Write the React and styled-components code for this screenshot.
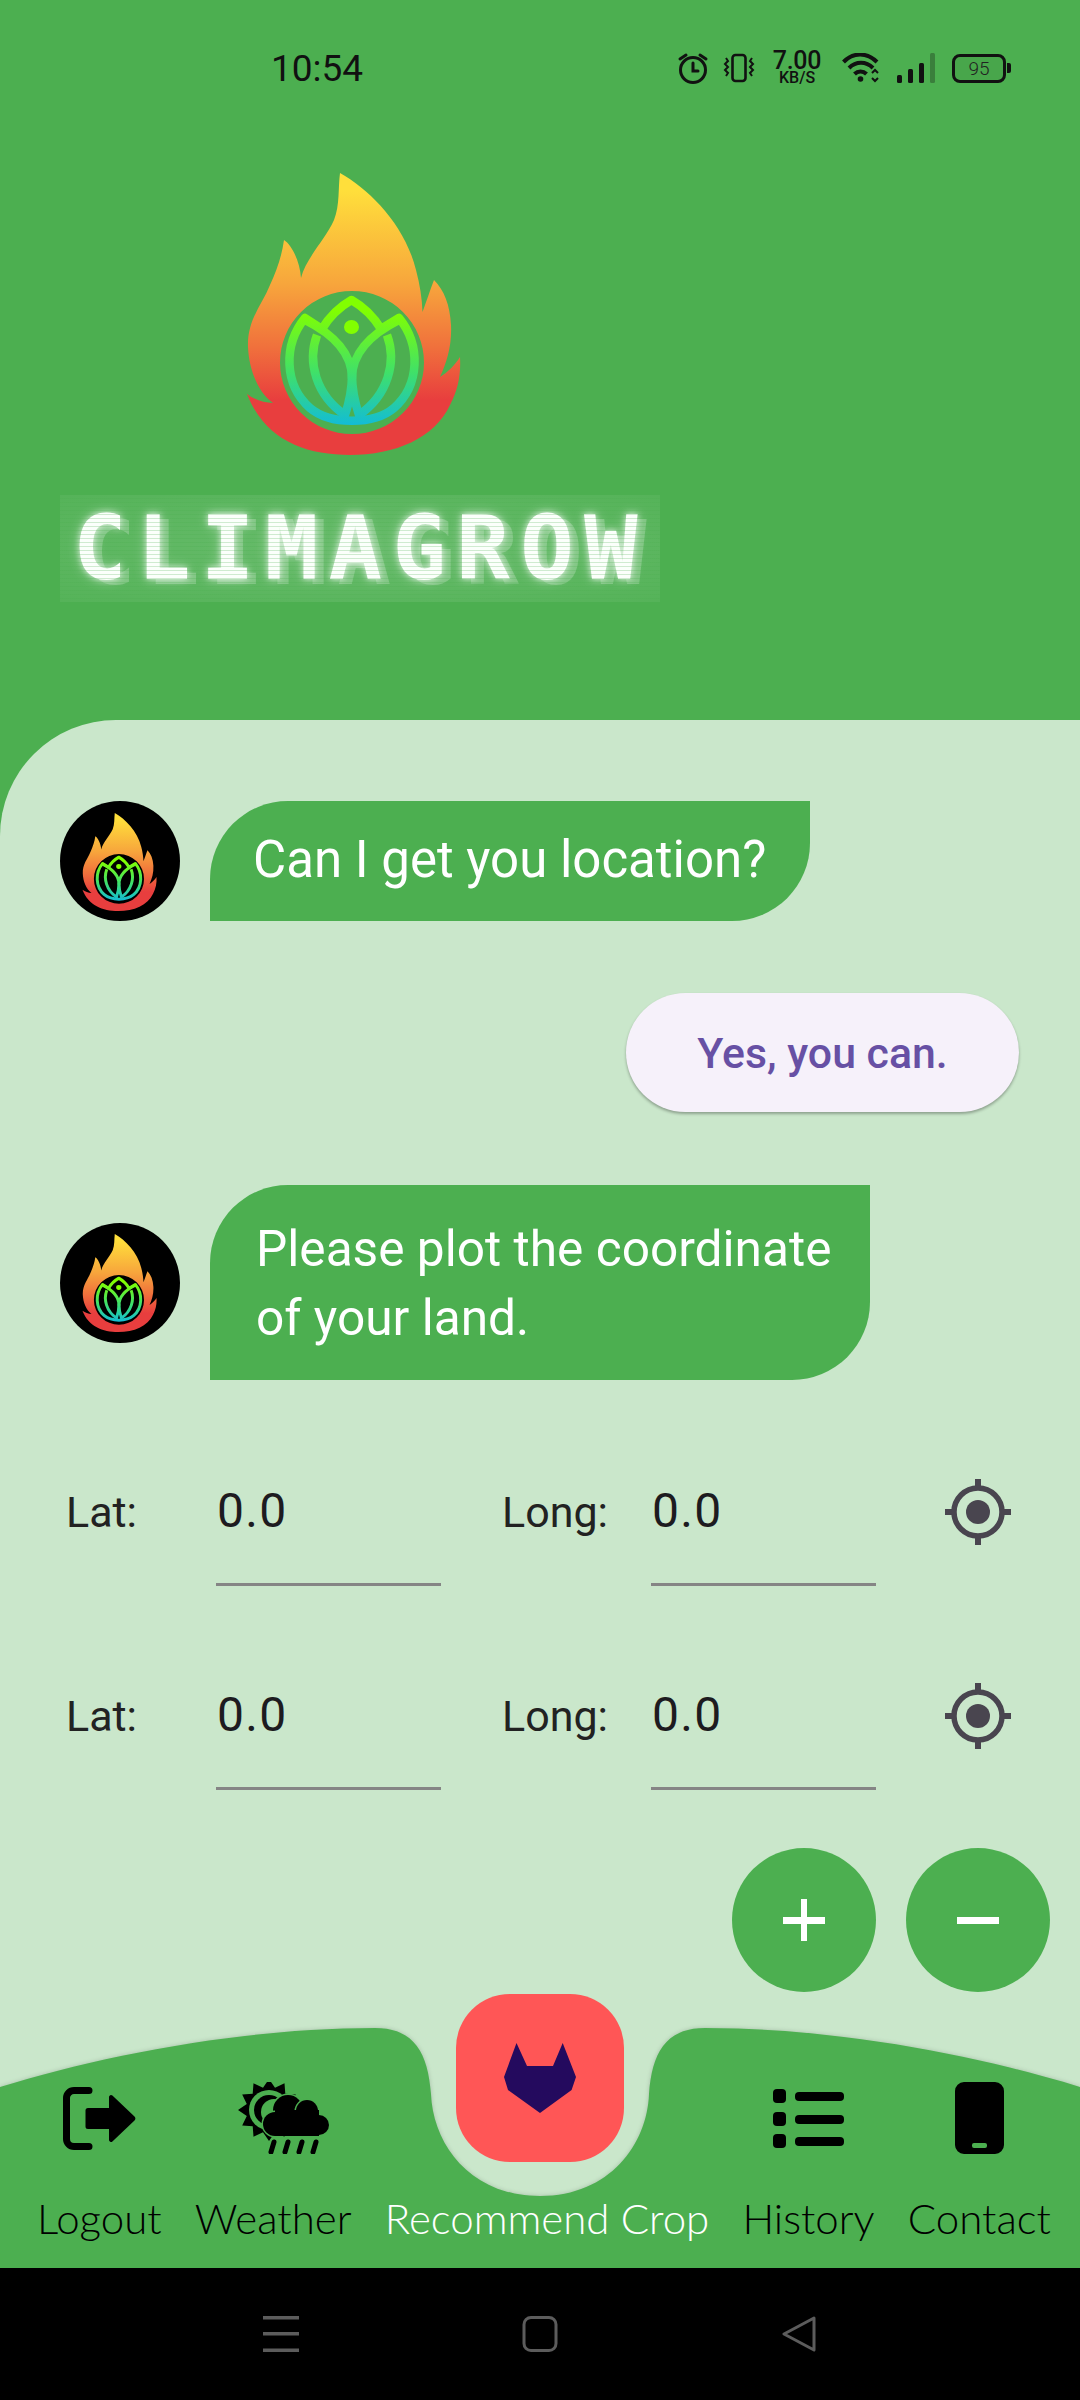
import React from 'react';
import styled, { createGlobalStyle } from 'styled-components';

const GREEN = '#4CAF50';
const LIGHT = '#CAE7CB';

const Global = createGlobalStyle`
  html, body { margin: 0; padding: 0; background: #000; }
  * { box-sizing: border-box; }
`;

const Screen = styled.div`
  width: 1080px; height: 2400px; display: flex; flex-direction: column;
  background: ${GREEN}; font-family: Roboto, "Liberation Sans", sans-serif; overflow: hidden;
`;

const Header = styled.header`
  height: 720px; flex: none; display: flex; flex-direction: column; background: ${GREEN};
`;
const StatusBar = styled.div`
  height: 136px; flex: none; display: flex; align-items: center; padding: 0 0 0 271px; color: #111;
`;
const Clock = styled.span` font-size: 37px; line-height: 1; width: 406px; `;
const StatusIcons = styled.div` display: flex; align-items: center; `;
const Speed = styled.div`
  display: flex; flex-direction: column; align-items: center; width: 48px; margin: 0 21px 0 18px;
  font-size: 25px; font-weight: 500; line-height: 19px; letter-spacing: -.3px;
  & small { font-size: 16px; line-height: 15px; font-weight: 500; letter-spacing: 0; }
`;
const StatusSvg = styled.svg` display: block; flex: none; margin-left: ${p => p.$gap || 0}px; `;
const Battery = styled.div`
  position: relative; width: 54px; height: 29px; margin-left: 17px; border: 3.5px solid #111; border-radius: 8px;
  display: flex; align-items: center; justify-content: center; font-size: 19px; font-weight: 300; color: #222;
  background: rgba(0,0,0,.05);
  &::after { content: ''; position: absolute; right: -8px; top: 6px; width: 4px; height: 10px; background: #111; border-radius: 0 2px 2px 0; }
`;
const BigLogo = styled.div` margin: 29px 0 0 240px; width: 230px; height: 295px; `;
const LogoSvg = styled.svg` display: block; width: 100%; height: 100%; `;
const Wordmark = styled.div`
  position: relative; width: 600px; height: 107px; margin: 35px 0 0 60px; padding-left: 13px;
  display: flex; align-items: center; overflow: hidden;
  background: radial-gradient(ellipse at center, rgba(255,255,255,.16), rgba(255,255,255,.05));
  font-family: "DejaVu Sans Mono", monospace; font-weight: 700; font-size: 89px; line-height: 1;
  letter-spacing: 10.300px; color: #fbfffb; white-space: nowrap;
  text-shadow: 0 0 6px rgba(255,255,255,.75), 0 0 14px rgba(255,255,255,.4), 9px 5px 0 rgba(255,255,255,.22);
  &::after {
    content: ''; position: absolute; inset: 0;
    background: repeating-linear-gradient(to bottom, transparent 0 3px, rgba(76,175,80,.25) 3px 4px);
  }
`;

const Panel = styled.main`
  flex: 1; display: flex; flex-direction: column; min-height: 0;
  background: ${LIGHT}; border-top-left-radius: 116px; padding-top: 81px;
`;
const BotRow = styled.div`
  display: flex; align-items: center; gap: 30px; padding-left: 60px;
  margin-top: ${p => p.$top || 0}px;
`;
const Avatar = styled.div`
  width: 120px; height: 120px; flex: none; border-radius: 50%; background: #000;
  display: flex; align-items: center; justify-content: center;
`;
const AvatarLogo = styled.div` width: 80px; height: 103px; `;
const Bubble = styled.div`
  width: ${p => p.$width}px; padding: ${p => p.$pad}; background: ${GREEN}; color: #fff;
  font-size: ${p => p.$size}px; line-height: 69px;
  border-radius: 78px 0 78px 0;
`;
const ReplyRow = styled.div` display: flex; justify-content: flex-end; padding-right: 61px; margin-top: 72px; `;
const Reply = styled.button`
  width: 393px; height: 119px; border: 0; border-radius: 60px; background: #F6F1FA; color: #6750A4;
  font: 500 42.800px Roboto, sans-serif; box-shadow: 0 2px 3px rgba(0,0,0,.3); padding: 0;
`;
const Fields = styled.section` margin-top: 80px; display: flex; flex-direction: column; gap: 78px; `;
const FieldRow = styled.div` height: 126px; display: flex; align-items: flex-start; padding-left: 66px; `;
const Label = styled.label`
  width: ${p => p.$w}px; flex: none; font-size: 43px; line-height: 104px; color: #222; margin-left: ${p => p.$ml || 0}px;
`;
const Field = styled.div`
  width: 225px; height: 126px; flex: none; font-size: 48px; line-height: 102px; color: #1D1B20; letter-spacing: 1.300px;
  border-bottom: 3px solid #858585; padding-left: 1px;
`;
const Target = styled.svg` display: block; flex: none; width: 66px; height: 66px; margin: 19px 0 0 69px; `;
const FabRow = styled.div` display: flex; justify-content: flex-end; gap: 30px; padding-right: 30px; margin-top: 58px; `;
const Fab = styled.button`
  width: 144px; height: 144px; border: 0; padding: 0; border-radius: 50%; background: ${GREEN};
  display: flex; align-items: center; justify-content: center;
`;

const Nav = styled.nav`
  position: relative; height: 274px; flex: none; margin-top: 2px; background: ${LIGHT};
`;
const NavShape = styled.svg`
  position: absolute; left: 0; top: 0; width: 1080px; height: 274px; display: block;
  filter: drop-shadow(0 0 2px rgba(0,0,0,.18));
`;
const NavItems = styled.ul`
  position: relative; list-style: none; margin: 0; padding: 88px 29px 0 37px; height: 100%;
  display: flex; justify-content: space-between;
`;
const NavItem = styled.li`
  display: flex; flex-direction: column; align-items: center; height: 170px;
  font-family: Lato, sans-serif; font-weight: 300; font-size: 42px; line-height: 50px;
  color: ${p => (p.$active ? '#fff' : '#000')}; white-space: nowrap;
`;
const NavIcon = styled.div`
  height: 72px; width: 100px; display: flex; align-items: center; justify-content: center; margin-bottom: 39px; color: #000;
`;
const NavGlyph = styled.svg` display: block; flex: none; margin-left: ${p => p.$shift || 0}px; `;
const CropButton = styled.button`
  position: absolute; left: 456px; top: 0; width: 168px; height: 168px; border: 0; padding: 0;
  background: #FF5656; border-radius: 54px; display: flex; align-items: center; justify-content: center;
`;
const SystemBar = styled.div`
  height: 132px; flex: none; background: #000; display: flex; align-items: center;
  padding: 0 0 0 263px; gap: 223px;
`;

const Flame = () => (
  <LogoSvg viewBox="240 165 230 295">
    <defs>
      <linearGradient id="flame" gradientUnits="userSpaceOnUse" x1="0" y1="190" x2="0" y2="400">
        <stop offset="0" stopColor="#FFDF3B" />
        <stop offset=".45" stopColor="#F7A53C" />
        <stop offset=".75" stopColor="#F0703C" />
        <stop offset="1" stopColor="#E83E3E" />
      </linearGradient>
      <linearGradient id="lotus" gradientUnits="userSpaceOnUse" x1="0" y1="310" x2="0" y2="425">
        <stop offset="0" stopColor="#82FF00" />
        <stop offset=".55" stopColor="#3FE06A" />
        <stop offset="1" stopColor="#12BCD6" />
      </linearGradient>
    </defs>
    <path
      fill="url(#flame)"
      fillRule="evenodd"
      d="M340 173 C370 190 405 225 416 270 C420 285 422 298 422.500 312 C426 303 430 290 434 280 C444 290 450 305 451 325 C452 345 447 362 440 377 C448 372 455 365 460 357 C461 375 458 390 450 405 C435 438 395 455 350 455 C305 455 265 440 247 394 C255 400 264 403 273 403 C258 392 249 370 248 347 C247 320 262 305 270 285 C277 270 282 255 284 240 C292 245 300 262 301 278 C306 258 325 240 334 220 C340 205 338 188 340 173 Z M352 291 A72 71.500 0 1 0 352 434 A72 71.500 0 1 0 352 291 Z"
    />
    <g fill="none" stroke="url(#lotus)" strokeWidth="8.500" strokeLinejoin="round">
      <path d="M305 318 C283 345 284 385 310 408 C330 425 374 425 394 408 C420 385 421 345 399 318 L381 329 C372 314 362 306 351.500 300 C341 306 331 314 322 329 Z" />
      <path d="M305 320 C335 335 352 355 352 378 C352 355 369 335 399 320" />
      <path d="M317 335 C307 362 316 395 345 415 C350 400 352 390 352 375 C352 390 354 400 359 415 C388 395 397 362 387 335" />
    </g>
    <ellipse cx="351.500" cy="327" rx="7.500" ry="7" fill="#82FF00" />
  </LogoSvg>
);

const TargetIcon = () => (
  <Target viewBox="0 0 66 66" fill="#49454F">
    <circle cx="33" cy="33" r="12" />
    <circle cx="33" cy="33" r="24" fill="none" stroke="#49454F" strokeWidth="5.500" />
    <rect x="30" y="0" width="6" height="9" />
    <rect x="30" y="57" width="6" height="9" />
    <rect x="0" y="30" width="9" height="6" />
    <rect x="57" y="30" width="9" height="6" />
  </Target>
);

const Row = () => (
  <FieldRow>
    <Label $w={150}>Lat:</Label>
    <Field>0.0</Field>
    <Label $w={149} $ml={61}>Long:</Label>
    <Field>0.0</Field>
    <TargetIcon />
  </FieldRow>
);

const sunPoints = Array.from({ length: 24 }, (_, i) => {
  const a = (i * Math.PI) / 12;
  const r = i % 2 ? 23 : 31;
  return `${(31 + r * Math.cos(a)).toFixed(1)},${(28 + r * Math.sin(a)).toFixed(1)}`;
}).join(' ');

export default function App() {
  return (
    <Screen>
      <Global />
      <Header>
        <StatusBar>
          <Clock>10:54</Clock>
          <StatusIcons>
            <StatusSvg width="32" height="32" viewBox="0 0 32 32" fill="none" stroke="#111" strokeWidth="3">
              <circle cx="16" cy="18" r="12.500" />
              <path d="M16 11v8h5M3 7l6-4M29 7l-6-4" strokeLinecap="round" />
            </StatusSvg>
            <StatusSvg $gap={14} width="32" height="30" viewBox="0 0 32 30" fill="none" stroke="#111" strokeWidth="2.600">
              <rect x="9.500" y="2" width="13" height="26" rx="3" />
              <path d="M3 5l2 3-3 3 3 3-3 3 3 3-2 3M29 5l-2 3 3 3-3 3 3 3-3 3 2 3" strokeWidth="2" />
            </StatusSvg>
            <Speed>7.00<small>KB/S</small></Speed>
            <StatusSvg width="38" height="30" viewBox="0 0 38 30" fill="none" stroke="#111" strokeWidth="4">
              <path d="M1.500 9C11-1 25-1 35 9M7 15c7-7 17-7 24 0M12.500 21c3.500-3.500 8.500-3.500 12 0" />
              <circle cx="18.500" cy="26" r="2.800" fill="#111" stroke="none" />
              <path d="M30 20l3-3 3 3M30 25l3 3 3-3" strokeWidth="2" />
            </StatusSvg>
            <StatusSvg $gap={17} width="38" height="30" viewBox="0 0 38 30">
              <rect x="0" y="22" width="5" height="8" rx="1.500" fill="#111" />
              <rect x="11" y="16" width="5" height="14" rx="1.500" fill="#111" />
              <rect x="22" y="10" width="5" height="20" rx="1.500" fill="#111" />
              <rect x="33" y="0" width="5" height="30" rx="1.500" fill="#111" opacity=".3" />
            </StatusSvg>
            <Battery>95</Battery>
          </StatusIcons>
        </StatusBar>
        <BigLogo><Flame /></BigLogo>
        <Wordmark>CLIMAGROW</Wordmark>
      </Header>

      <Panel>
        <BotRow>
          <Avatar><AvatarLogo><Flame /></AvatarLogo></Avatar>
          <Bubble $width={600} $size={51} $pad="24px 43px 27px">Can I get you location?</Bubble>
        </BotRow>
        <ReplyRow><Reply>Yes, you can.</Reply></ReplyRow>
        <BotRow $top={73}>
          <Avatar><AvatarLogo><Flame /></AvatarLogo></Avatar>
          <Bubble $width={660} $size={49.6} $pad="30px 16px 27px 46px">Please plot the coordinate of your land.</Bubble>
        </BotRow>
        <Fields>
          <Row />
          <Row />
        </Fields>
        <FabRow>
          <Fab aria-label="Add">
            <svg width="42" height="42" viewBox="0 0 42 42" fill="#fff"><rect x="18" y="0" width="6" height="42" /><rect x="0" y="18" width="42" height="7" /></svg>
          </Fab>
          <Fab aria-label="Remove">
            <svg width="42" height="7" viewBox="0 0 42 7" fill="#fff"><rect x="0" y="0" width="42" height="7" /></svg>
          </Fab>
        </FabRow>
        <Nav>
          <NavShape viewBox="0 0 1080 274">
            <path fill={GREEN} d="M0 93 C100 62 240 34 375 34 C415 34 428 60 431 100 C433 150 470 202 540 202 C610 202 647 150 649 100 C652 60 665 34 705 34 C840 34 980 62 1080 93 L1080 274 L0 274 Z" />
          </NavShape>
          <NavItems>
            <NavItem>
              <NavIcon>
                <NavGlyph width="73" height="63" viewBox="0 0 73 63">
                  <path d="M26 3.500H11a7.500 7.500 0 0 0-7.500 7.500v41a7.500 7.500 0 0 0 7.500 7.500h15" fill="none" stroke="#000" strokeWidth="7" strokeLinecap="round" />
                  <path d="M25 21H46V10a2 2 0 0 1 3.400-1.400L71.500 29.500a3 3 0 0 1 0 4L49.400 54.400A2 2 0 0 1 46 53V42H25a2.500 2.500 0 0 1-2.500-2.500v-16A2.500 2.500 0 0 1 25 21z" fill="#000" />
                </NavGlyph>
              </NavIcon>
              Logout
            </NavItem>
            <NavItem>
              <NavIcon>
                <NavGlyph $shift={20} width="91" height="72" viewBox="0 0 91 72">
                  <polygon points={sunPoints} fill="#000" />
                  <circle cx="31" cy="28" r="20" fill={GREEN} />
                  <circle cx="31" cy="28" r="15" fill="#000" />
                  <circle cx="36" cy="30" r="13" fill={GREEN} />
                  <g fill="#000" stroke={GREEN} strokeWidth="3" paintOrder="stroke">
                    <circle cx="50" cy="28" r="15" />
                    <circle cx="69" cy="29" r="11" />
                    <circle cx="81" cy="43" r="10" />
                    <circle cx="37" cy="42" r="12" />
                  </g>
                  <rect x="37" y="28" width="44" height="26" fill="#000" />
                  <path d="M36 60l-3 10M50 60l-3 10M64 60l-3 10M78 60l-3 10" stroke="#000" strokeWidth="5" strokeLinecap="round" />
                </NavGlyph>
              </NavIcon>
              Weather
            </NavItem>
            <NavItem $active><NavIcon />Recommend Crop</NavItem>
            <NavItem>
              <NavIcon>
                <NavGlyph width="71" height="59" viewBox="0 0 71 59" fill="#000">
                  <rect x="0" y="0" width="13" height="14" rx="4" />
                  <rect x="22" y="3" width="49" height="9" rx="4" />
                  <rect x="0" y="23" width="13" height="14" rx="4" />
                  <rect x="22" y="26" width="49" height="9" rx="4" />
                  <rect x="0" y="45" width="13" height="14" rx="4" />
                  <rect x="22" y="48" width="49" height="9" rx="4" />
                </NavGlyph>
              </NavIcon>
              History
            </NavItem>
            <NavItem>
              <NavIcon>
                <NavGlyph width="49" height="72" viewBox="0 0 49 72">
                  <path fillRule="evenodd" d="M9 0h31a9 9 0 0 1 9 9v54a9 9 0 0 1-9 9H9a9 9 0 0 1-9-9V9a9 9 0 0 1 9-9z M19 61a2 2 0 0 0-2 2v1a2 2 0 0 0 2 2h11a2 2 0 0 0 2-2v-1a2 2 0 0 0-2-2z" fill="#000" />
                </NavGlyph>
              </NavIcon>
              Contact
            </NavItem>
          </NavItems>
          <CropButton aria-label="Recommend Crop">
            <svg width="72" height="70" viewBox="0 0 72 70"><path fill="#240A5E" d="M12.500 0L23 23H49L58.700 0L72 34L67.600 47L36 70L4 47L0 34Z" /></svg>
          </CropButton>
        </Nav>
      </Panel>
      <SystemBar>
        <svg width="36" height="36" viewBox="0 0 36 36" fill="#5c5c5c"><rect y="0" width="36" height="3.500" /><rect y="16" width="36" height="3.500" /><rect y="32.500" width="36" height="3.500" /></svg>
        <svg width="36" height="36" viewBox="0 0 36 36" fill="none" stroke="#5c5c5c" strokeWidth="3"><rect x="2" y="1.500" width="32" height="33" rx="7" /></svg>
        <svg width="36" height="36" viewBox="0 0 36 36" fill="none" stroke="#5c5c5c" strokeWidth="3" strokeLinejoin="round"><path d="M33 2L3 18L33 34Z" /></svg>
      </SystemBar>
    </Screen>
  );
}
